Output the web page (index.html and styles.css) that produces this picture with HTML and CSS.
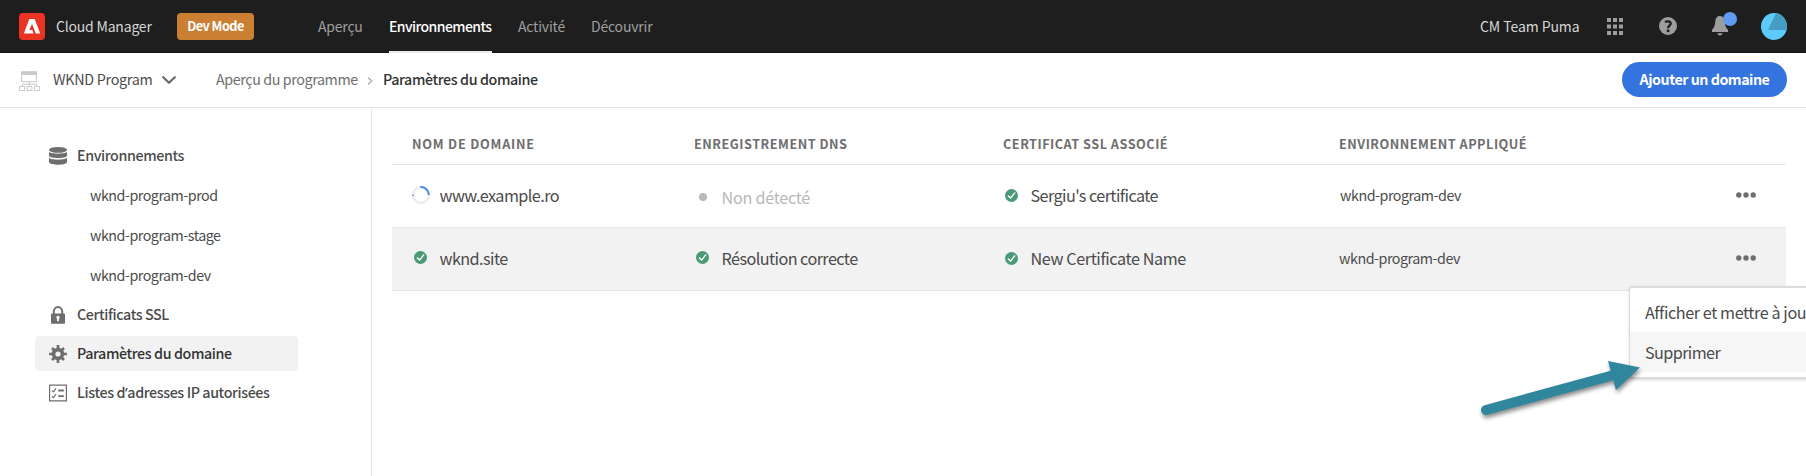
FILE: index.html
```html
<!DOCTYPE html>
<html lang="fr">
<head>
<meta charset="utf-8">
<title>Cloud Manager</title>
<link rel="stylesheet" href="styles.css">
</head>
<body>
<svg class="defs" aria-hidden="true">
  <symbol id="check" viewBox="0 0 13 13"><circle cx="6.5" cy="6.5" r="6.5" fill="#4a9a78"/><path d="M3.4 6.9 5.6 9.1 9.7 3.9" fill="none" stroke="#fff" stroke-width="1.4" stroke-linecap="round" stroke-linejoin="round"/></symbol>
  <symbol id="more" viewBox="0 0 20 6"><circle cx="2.8" cy="3" r="2.7"/><circle cx="10" cy="3" r="2.7"/><circle cx="17.2" cy="3" r="2.7"/></symbol>
</svg>
<header class="topbar">
  <svg class="logo" viewBox="0 0 26 27"><rect width="26" height="27" rx="4" fill="#eb3323"/><path d="M10.3 6h5.4l5.5 14.5h-4.4L13 10.8l-2.5 6.3h2.9l1.2 3.4H4.9z" fill="#fff"/></svg>
  <span class="brand">Cloud Manager</span>
  <span class="badge">Dev Mode</span>
  <nav class="tabs">
    <a class="tab tab-home">Aperçu</a>
    <a class="tab tab-env active">Environnements</a>
    <a class="tab tab-act">Activité</a>
    <a class="tab">Découvrir</a>
  </nav>
  <div class="tools">
    <span class="org">CM Team Puma</span>
    <svg class="apps" viewBox="0 0 16 17" fill="#9d9d9d"><path d="M0 0h4v4H0zM6 0h4v4H6zM12 0h4v4h-4zM0 6.5h4v4H0zM6 6.5h4v4H6zM12 6.5h4v4h-4zM0 13h4v4H0zM6 13h4v4H6zM12 13h4v4h-4z"/></svg>
    <svg class="help" viewBox="0 0 18 18"><circle cx="9" cy="9" r="9" fill="#9d9d9d"/><path d="M6.2 5.4C7.2 4.1 11.7 3.7 11.7 6.6c0 2.1-2.6 2.2-2.6 4.6" fill="none" stroke="#1e1e1e" stroke-width="2.3"/><circle cx="9.1" cy="13.8" r="1.5" fill="#1e1e1e"/></svg>
    <svg class="bell" viewBox="0 0 26 24"><path d="M7.8 4.1c2.8 0 4.6 2 4.9 5.3.3 3.8 1 6.2 3.3 8.3V20H0v-2.3c2.3-2.1 3-4.5 3.3-8.3C3.5 6.1 5 4.100 7.8 4.100zM5.500 21.300h4.800c0 1.300-1 2.300-2.400 2.300s-2.400-1-2.400-2.300z" fill="#9d9d9d"/><circle cx="18" cy="7" r="7" fill="#5f9bf0"/></svg>
    <svg class="avatar" viewBox="0 0 26 27"><clipPath id="face"><ellipse cx="13" cy="13.5" rx="13" ry="13.5"/></clipPath><g clip-path="url(#face)"><rect width="26" height="27" fill="#5acbfa"/><path d="M15 0 7 17h16.5L26 19V0z" fill="#459dc4"/></g></svg>
  </div>
</header>
<div class="subbar">
  <svg class="program" viewBox="0 0 21 20" fill="none" stroke="#c9c9c9"><path d="M2.5.7h15v10h-15z"/><path d="M2.5 2.4h15" stroke-width="3"/><path d="M10.3 10.700v4M3.300 15v-1.800h14.400V15M.5 15.500h5v4h-5zM8 15.500h5v4H8zM15.500 15.500h5v4h-5z"/></svg>
  <span class="prog-name">WKND Program</span>
  <svg class="chev" viewBox="0 0 14 8" fill="none" stroke="#6a6a6a" stroke-width="2.2" stroke-linecap="round" stroke-linejoin="round"><path d="m1.2 1.2 5.8 5.6 5.8-5.6"/></svg>
  <span class="crumb">Aperçu du programme</span>
  <svg class="sep" viewBox="0 0 6 8" fill="none" stroke="#b3b3b3" stroke-width="1.5"><path d="m1 .6 3.8 3.4L1 7.4"/></svg>
  <span class="crumb-now">Paramètres du domaine</span>
  <button class="add">Ajouter un domaine</button>
</div>
<div class="body">
  <aside class="side">
    <a class="item"><svg viewBox="0 0 18 18" fill="#6e6e6e"><ellipse cx="9" cy="2.9" rx="9" ry="2.9"/><path d="M0 4.8c2 2.5 16 2.5 18 0v4c-1 3.2-17 3.2-18 0zM0 10.8c2 2.5 16 2.5 18 0V15c-1 3.7-17 3.7-18 0z"/></svg><span>Environnements</span></a>
    <a class="sub">wknd-program-prod</a>
    <a class="sub">wknd-program-stage</a>
    <a class="sub">wknd-program-dev</a>
    <a class="item"><svg viewBox="0 0 18 18"><path d="M4.8 8V5.5a4.2 4.5 0 0 1 8.4 0V8" fill="none" stroke="#6e6e6e" stroke-width="2"/><rect x="2" y="7.5" width="14" height="10.3" rx=".8" fill="#6e6e6e"/><path d="M9 9.7a1.7 1.7 0 0 1 .9 3.1v2.5H8.1v-2.5A1.7 1.7 0 0 1 9 9.7z" fill="#fff"/></svg><span>Certificats SSL</span></a>
    <a class="item selected"><svg viewBox="-9 -9 18 18"><path d="M0-8.9V8.9M-8.9 0H8.9M-6-6 6 6M6-6-6 6" stroke="#6e6e6e" stroke-width="2.7"/><circle r="6.2" fill="#6e6e6e"/><circle r="2.6" fill="#f2f2f2"/></svg><span>Paramètres du domaine</span></a>
    <a class="item"><svg viewBox="0 0 18 18" fill="none" stroke="#6e6e6e"><path d="M.6 1.1h16.8v15.8H.6z" stroke-width="1.2"/><path d="M9.2 6.5h5.6M9.2 12.2h5.6" stroke-width="1.8"/><path d="m3 6.6 1.4 1.3L7 4.4M3 12.3l1.4 1.3L7 10.1" stroke-width="1.2"/></svg><span>Listes d<span class="apos">’</span>adresses IP autorisées</span></a>
  </aside>
  <main class="main">
    <div class="row head">
      <span class="wide">Nom de domaine</span><span>Enregistrement DNS</span><span>Certificat SSL associé</span><span>Environnement appliqué</span>
    </div>
    <div class="row">
      <div class="cell"><svg class="spin" viewBox="0 0 18 18" fill="none" stroke-width="2"><circle cx="9" cy="9" r="7.9" stroke="#e8e8e8"/><path d="M8.3 1.1A7.9 7.9 0 0 1 16.9 9" stroke="#4b8ce8"/><path d="M0 9.3h2" stroke="#4b8ce8" stroke-width="1"/></svg><span>www.example.ro</span></div>
      <div class="cell low"><i class="dot"></i><span>Non détecté</span></div>
      <div class="cell"><svg class="ok"><use href="#check"/></svg><span>Sergiu's certificate</span></div>
      <div class="cell env first">wknd-program-dev</div>
      <svg class="more"><use href="#more"/></svg>
    </div>
    <div class="row hover">
      <div class="cell"><svg class="ok up"><use href="#check"/></svg><span>wknd.site</span></div>
      <div class="cell"><svg class="ok up"><use href="#check"/></svg><span>Résolution correcte</span></div>
      <div class="cell loose"><svg class="ok"><use href="#check"/></svg><span>New Certificate Name</span></div>
      <div class="cell env">wknd-program-dev</div>
      <svg class="more"><use href="#more"/></svg>
    </div>
  </main>
</div>
<div class="menu">
  <div class="opt">Afficher et mettre à jour</div>
  <div class="opt on">Supprimer</div>
</div>
<svg class="arrow" viewBox="0 0 180 70"><path d="M6 50 132 15.500" stroke="#30869c" stroke-width="10" stroke-linecap="round"/><path d="M128 1 160 7.500 136 30z" fill="#30869c"/></svg>
</body>
</html>
```
FILE: styles.css
```css
* { box-sizing: border-box; }
body { margin: 0; width: 1806px; height: 476px; overflow: hidden; position: relative; background: #fff; font-family: "Noto Sans CJK SC", "Noto Sans", sans-serif; font-size: 14.3px; line-height: 20px; letter-spacing: -.4px; white-space: nowrap; color: #4b4b4b; }
.defs { position: absolute; width: 0; height: 0; }
svg { display: block; flex: none; }
.topbar { display: flex; align-items: center; height: 53px; padding: 0 19px; background: #1e1e1e; border-bottom: 1px solid #1a1415; color: #d6d6d6; font-size: 14px; letter-spacing: -.2px; }
.logo { width: 26px; height: 27px; }
.brand { width: 121px; margin-left: 11px; }
.badge { width: 77px; height: 27px; line-height: 26px; border-radius: 4px; background: #cb7f33; color: #fff; font-size: 12.7px; font-weight: 700; letter-spacing: -.55px; text-align: center; }
.tabs { display: flex; height: 53px; margin-left: 64px; line-height: 53px; color: #9f9f9f; }
.tab { height: 53px; }
.tab-home { width: 71px; }
.tab-env { width: 103px; margin-right: 26px; letter-spacing: -.56px; }
.tab-act { width: 73px; }
.active { color: #fff; font-weight: 500; border-bottom: 2px solid #ececec; }
.tools { display: flex; align-items: center; margin-left: auto; }
.org { width: 127px; letter-spacing: -.08px; }
.apps { width: 16px; height: 17px; }
.help { width: 18px; height: 18px; margin-left: 36px; }
.bell { width: 26px; height: 24px; margin: -5px 0 0 35px; }
.avatar { width: 26px; height: 27px; margin-left: 23px; }
.subbar { display: flex; align-items: center; height: 55px; padding: 0 19px 1px 19px; border-bottom: 1px solid #e4e4e4; }
.program { width: 21px; height: 20px; margin-top: 2px; }
.prog-name { width: 109px; margin-left: 13px; padding-bottom: 2px; letter-spacing: -.28px; }
.chev { width: 14px; height: 8px; }
.crumb { width: 151px; margin-left: 40px; padding-bottom: 2px; color: #6e6e6e; }
.sep { width: 6px; height: 8px; margin-top: 2px; }
.crumb-now { margin-left: 10px; padding-bottom: 2px; font-weight: 500; color: #323232; }
.add { width: 165px; height: 35px; margin-left: auto; padding: 0 0 2px; border: 0; border-radius: 18px; background: #3374df; color: #fff; font: inherit; font-weight: 700; letter-spacing: -.5px; }
.body { display: flex; height: 368px; }
.side { width: 372px; padding: 30px 73px 0 35px; border-right: 1px solid #e4e4e4; }
.item { display: flex; align-items: center; height: 35px; padding-left: 14px; gap: 10px; margin-bottom: 4px; border-radius: 4px; font-weight: 500; }
.item > span { padding-bottom: 2px; }
.item svg { width: 18px; height: 18px; }
.apos { font-family: "Noto Sans", sans-serif; line-height: 1; }
.selected { background: #f2f2f2; color: #323232; }
.sub { display: flex; align-items: center; height: 36px; padding: 0 0 1px 55px; margin-bottom: 4px; letter-spacing: -.5px; }
.main { flex: 1; padding: 0 20px; }
.row { display: grid; grid-template-columns: 282px 309px 336px 1fr 20px; align-items: center; height: 63px; padding: 0 30px 2px 20px; border-bottom: 1px solid #e4e4e4; font-size: 16.2px; letter-spacing: -.56px; }
.head { height: 57px; padding: 16px 30px 0 20px; font-size: 12.7px; font-weight: 700; letter-spacing: .5px; text-transform: uppercase; color: #6e6e6e; }
.wide { letter-spacing: .78px; }
.hover { background: #f2f2f2; }
.cell { display: flex; align-items: center; }
.loose { letter-spacing: -.4px; }
.ok { width: 13px; height: 13px; margin: 0 12.500px 0 2px; }
.up { margin-top: -2px; }
.spin { width: 18px; height: 18px; margin: -1px 9.500px 0 0; }
.low { padding-top: 4px; letter-spacing: -.28px; color: #b9b9b9; }
.dot { width: 8px; height: 8px; margin: 0 14.500px 0 5px; border-radius: 50%; background: #b9b9b9; }
.env { font-size: 14.3px; letter-spacing: -.48px; }
.first { padding-left: 1px; }
.more { width: 20px; height: 6px; fill: #6e6e6e; }
.menu { position: absolute; left: 1629px; top: 286px; width: 240px; height: 93px; padding: 5px 0 6px; border: 2px solid #dcdcdc; border-left-width: 1px; border-radius: 4px; background: #fff; box-shadow: 0 1px 3px rgba(0,0,0,.15); }
.opt { height: 39px; padding: 9px 0 0 15px; font-size: 16.2px; letter-spacing: -.42px; }
.on { height: 40px; padding-top: 10px; background: #f6f6f6; letter-spacing: -.6px; }
.arrow { position: absolute; left: 1480px; top: 360px; width: 180px; height: 70px; overflow: visible; filter: drop-shadow(1px 3px 2px rgba(0,0,0,.45)); }
```
